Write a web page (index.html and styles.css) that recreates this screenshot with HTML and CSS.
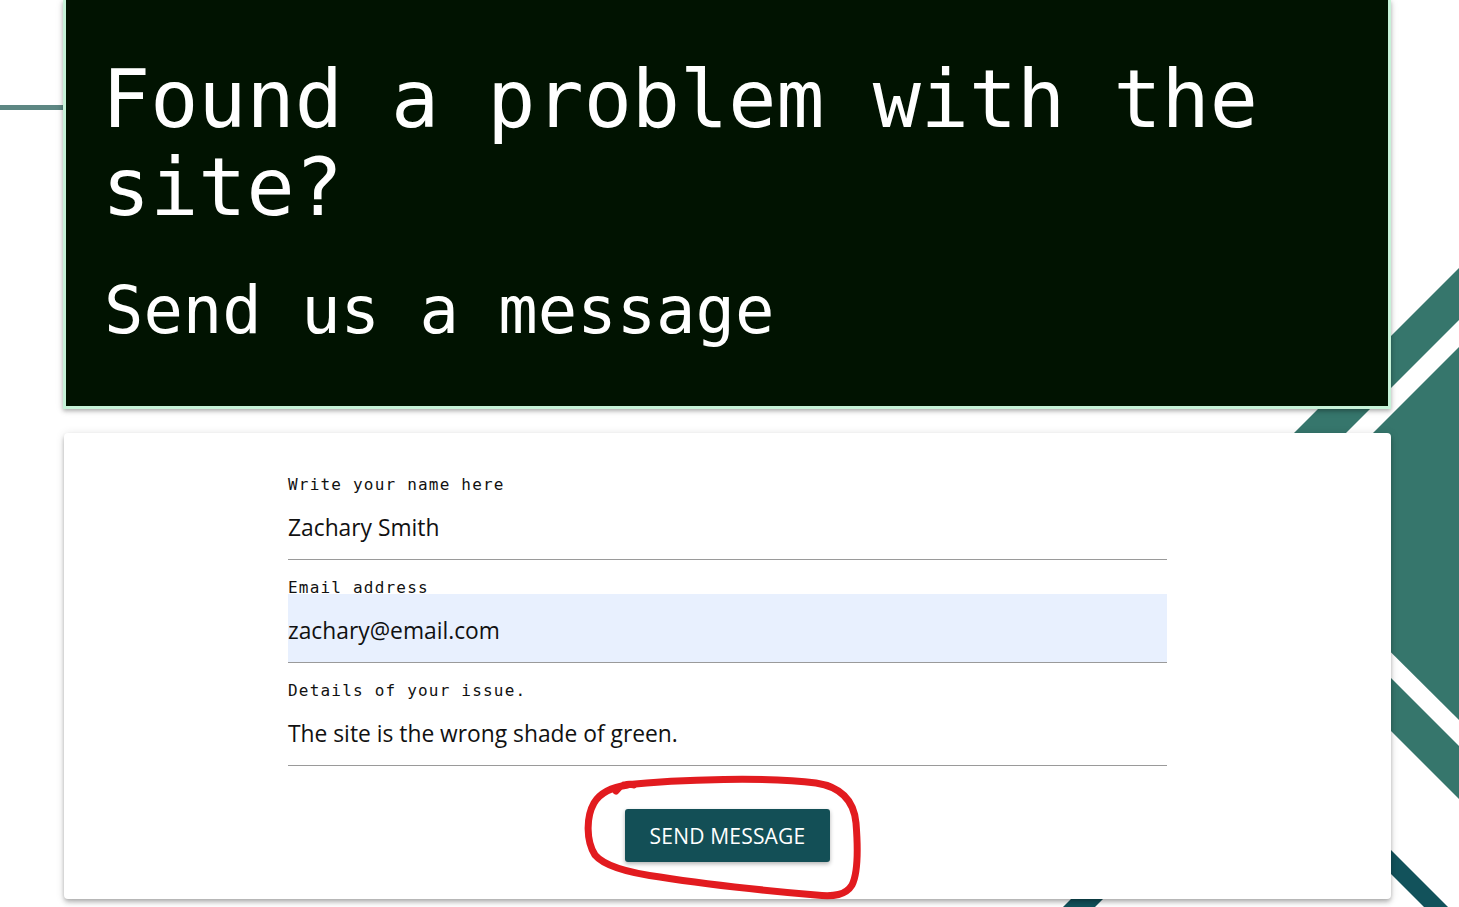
FILE: index.html
```html
<!DOCTYPE html>
<html lang="en">
<head>
<meta charset="utf-8">
<title>Contact</title>
<link rel="stylesheet" href="styles.css">
</head>
<body>
<div class="page">
  <svg class="decor" width="1459" height="907" viewBox="0 0 1459 907" aria-hidden="true">
    <rect x="0" y="105" width="80" height="5" fill="#5d8783"/>
    <polygon points="1459,268 1459,320 1200,579 1148,579" fill="#36766c"/>
    <polygon points="1459,347 1272,534 1459,720" fill="#36766c"/>
    <polygon points="1250,537 1459,746 1459,799 1250,590" fill="#36766c"/>
    <polygon points="1250,709 1459,918 1459,942 1250,733" fill="#12525b"/>
    <polygon points="1063,907 1095,907 1150,852 1118,852" fill="#12525b"/>
  </svg>
  <main class="wrap">
    <header class="hero">
      <h1 class="hero-title">Found a problem with the site?</h1>
      <h2 class="hero-sub">Send us a message</h2>
    </header>
    <section class="card">
      <div class="form">
        <div class="field">
          <div class="label">Write your name here</div>
          <div class="input">Zachary Smith</div>
        </div>
        <div class="field">
          <div class="label">Email address</div>
          <div class="input input-filled">zachary@email.com</div>
        </div>
        <div class="field">
          <div class="label">Details of your issue.</div>
          <div class="input">The site is the wrong shade of green.</div>
        </div>
        <div class="actions">
          <span class="btn-wrap">
            <button class="btn" type="button">SEND MESSAGE</button>
            <svg class="scribble" width="290" height="132" viewBox="0 0 290 132" aria-hidden="true">
              <path d="M44 12 C100 6 190 4 236 10 C262 14 274 28 276 50 C278 75 278 100 272 112 C266 122 254 124 236 122 C190 118 130 112 80 104 C50 100 25 94 15 82 C6 68 6 44 14 30 C20 20 32 14 48 12 M36 18 C40 12 48 10 54 12" fill="none" stroke="#e21b1f" stroke-width="7" stroke-linecap="round" stroke-linejoin="round"/>
            </svg>
          </span>
        </div>
      </div>
    </section>
  </main>
</div>
</body>
</html>
```
FILE: styles.css
```css
html, body {
  margin: 0;
  padding: 0;
  background: #ffffff;
  overflow: hidden;
}

.page {
  position: relative;
  width: 1459px;
  height: 907px;
  overflow: hidden;
}

.decor {
  position: absolute;
  left: 0;
  top: 0;
  z-index: 0;
}

.wrap {
  position: relative;
  z-index: 1;
  width: 1328px;
  margin-left: 63px;
  display: flex;
  flex-direction: column;
  gap: 24px;
}

.hero {
  background: #011301;
  border: 3px solid #c6f2d8;
  border-top: 0;
  padding: 56px 40px 60px 36px;
  box-shadow: 0 2px 4px rgba(0, 0, 0, 0.25), 0 1px 8px rgba(0, 0, 0, 0.12);
  color: #ffffff;
  font-family: "DejaVu Sans Mono", "Liberation Mono", monospace;
}

.hero-title {
  margin: 0;
  font-size: 80px;
  line-height: 88px;
  font-weight: normal;
}

.hero-sub {
  margin: 42px 0 0 2px;
  font-size: 65.5px;
  line-height: 72px;
  font-weight: normal;
}

.card {
  background: #ffffff;
  border-radius: 4px;
  margin-left: 1px;
  box-shadow: 0 2px 4px -1px rgba(0, 0, 0, 0.2), 0 4px 5px 0 rgba(0, 0, 0, 0.14), 0 1px 10px 0 rgba(0, 0, 0, 0.12);
  padding: 44px 0 37px 0;
  display: flex;
  justify-content: center;
}

.form {
  width: 879px;
  display: flex;
  flex-direction: column;
  gap: 20px;
}

.field {
  display: flex;
  flex-direction: column;
}

.label {
  font-family: "DejaVu Sans Mono", "Liberation Mono", monospace;
  font-size: 16px;
  line-height: 16px;
  height: 16px;
  margin-bottom: -2px;
  letter-spacing: 1.2px;
  color: #111111;
}

.input {
  box-sizing: border-box;
  height: 69px;
  padding-top: 22px;
  font-family: "Open Sans", "Noto Sans", sans-serif;
  font-size: 22.8px;
  line-height: 30px;
  color: #111111;
  border-bottom: 1px solid #9a9a9a;
}

.input-filled {
  background: #e8f0fe;
}

.actions {
  display: flex;
  justify-content: center;
  margin-top: 23px;
}

.btn-wrap {
  position: relative;
  display: inline-block;
}

.btn {
  display: block;
  width: 205px;
  height: 53px;
  border: 0;
  border-radius: 3px;
  background: #134f56;
  color: #ffffff;
  font-family: "Open Sans", "Noto Sans", sans-serif;
  font-size: 21px;
  letter-spacing: 0.2px;
  box-shadow: 0 2px 4px rgba(0, 0, 0, 0.3);
  cursor: pointer;
}

.scribble {
  position: absolute;
  left: -45px;
  top: -36px;
  pointer-events: none;
}
```
